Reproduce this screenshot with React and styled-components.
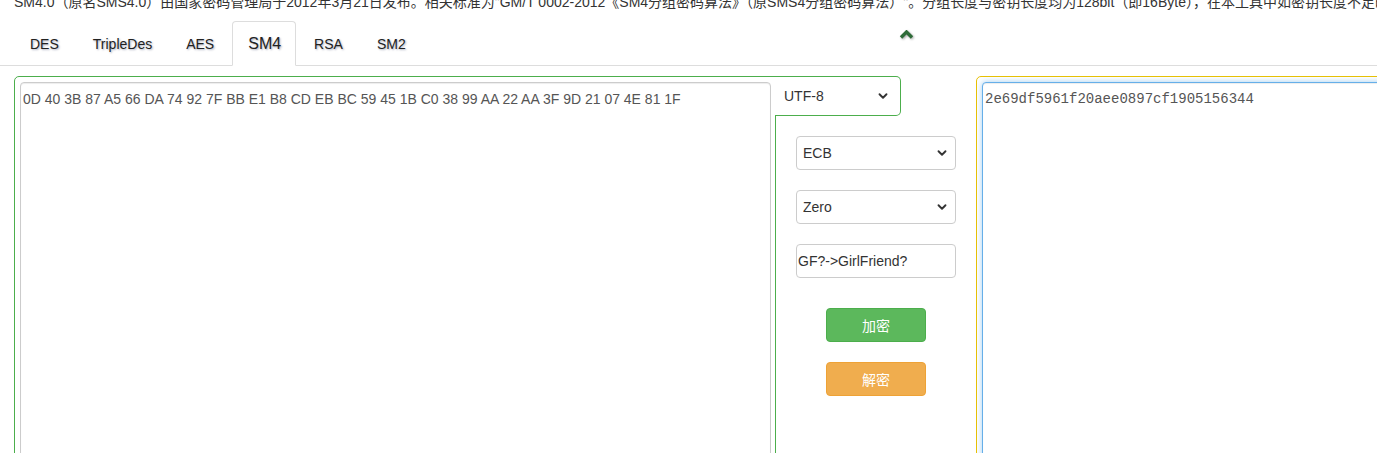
import React, { useState } from 'react';
import styled, { createGlobalStyle } from 'styled-components';
import { ChevronDown } from 'lucide-react';

const GlobalStyle = createGlobalStyle`
  html, body {
    margin: 0;
    padding: 0;
    background: #fff;
    overflow: hidden;
  }
  body {
    font-family: "Liberation Sans", Arial, "Noto Sans CJK SC", sans-serif;
    font-size: 14px;
    color: #333;
  }
  * {
    box-sizing: border-box;
  }
`;

const Page = styled.div`
  width: 1377px;
  height: 453px;
  overflow: hidden;
`;

const Intro = styled.p`
  margin: -8px 0 0;
  padding-left: 14px;
  line-height: 20px;
  white-space: nowrap;
  overflow: hidden;
  color: #333;
`;

const TabBar = styled.ul`
  display: flex;
  margin: 9px 0 0;
  padding: 0 0 0 14px;
  list-style: none;
  border-bottom: 1px solid #ddd;
  height: 45px;
`;

const Tab = styled.li`
  flex-shrink: 0;
  height: 45px;
  margin-right: 2px;
  margin-bottom: -1px;
  padding: 0 ${p => (p.$active ? 14 : 15)}px 0 15px;
  display: flex;
  align-items: center;
  font-size: ${p => (p.$active ? '16px' : '14px')};
  color: #222;
  text-shadow: 1px 1px 2px rgba(10, 20, 70, 0.35);
  border: 1px solid ${p => (p.$active ? '#ddd' : 'transparent')};
  border-bottom-color: ${p => (p.$active ? '#fff' : 'transparent')};
  border-radius: 4px 4px 0 0;
  background: ${p => (p.$active ? '#fff' : 'transparent')};
  cursor: pointer;
`;

const Collapse = styled.li`
  margin: 9px 0 0 475px;
  height: 10px;
  line-height: 0;
  filter: drop-shadow(1px 1px 1px rgba(0, 0, 0, 0.35));
`;

const Main = styled.div`
  display: flex;
  align-items: flex-start;
  margin-top: 10px;
  padding-left: 14px;

  & > * {
    flex-shrink: 0;
  }
`;

const InputBox = styled.div`
  width: 762px;
  height: 420px;
  padding: 5px 4px 5px 5px;
  border: 1px solid #4cae4c;
  border-radius: 5px 0 0 0;
`;

const TextArea = styled.textarea`
  display: block;
  width: 100%;
  height: 100%;
  resize: none;
  margin: 0;
  padding: 6px 2px;
  font-family: ${p =>
    p.$mono
      ? '"Liberation Mono", "Courier New", monospace'
      : '"Liberation Sans", Arial, sans-serif'};
  font-size: 14px;
  line-height: 20px;
  color: #555;
  border: 1px solid ${p => (p.$focus ? '#66afe9' : '#ccc')};
  border-radius: 4px;
  box-shadow: ${p =>
    p.$focus
      ? 'inset 0 1px 1px rgba(0,0,0,.075), 0 0 6px rgba(102,175,233,.6)'
      : 'inset 0 1px 1px rgba(0,0,0,.075)'};
  outline: none;
`;

const Controls = styled.div`
  width: 200px;
  display: flex;
  flex-direction: column;
  align-items: center;
`;

const CharsetCap = styled.div`
  position: relative;
  z-index: 1;
  align-self: flex-start;
  margin-left: -1px;
  width: 126px;
  height: 40px;
  padding: 0 4px;
  display: flex;
  align-items: center;
  background: #fff;
  border: 1px solid #4cae4c;
  border-left: none;
  border-radius: 0 5px 5px 0;
  margin-bottom: 20px;
`;

const SelectWrap = styled.div`
  position: relative;
  width: ${p => p.$width}px;
  margin-bottom: ${p => p.$gap ?? 20}px;

  svg {
    position: absolute;
    right: ${p => p.$arrowRight ?? 7}px;
    top: 50%;
    transform: translateY(-50%);
    pointer-events: none;
    color: #333;
  }
`;

const Select = styled.select`
  appearance: none;
  width: 100%;
  height: ${p => (p.$bare ? 30 : 34)}px;
  padding: 0 24px 0 ${p => (p.$bare ? 5 : 6)}px;
  font-family: "Liberation Sans", Arial, sans-serif;
  font-size: 14px;
  color: #333;
  background: #fff;
  border: ${p => (p.$bare ? 'none' : '1px solid #ccc')};
  border-radius: 4px;
  outline: none;
`;

const KeyInput = styled.input`
  width: 160px;
  height: 34px;
  margin-bottom: 30px;
  padding: 0 1px;
  font-family: "Liberation Sans", Arial, sans-serif;
  font-size: 14px;
  color: #333;
  border: 1px solid #ccc;
  border-radius: 4px;
  outline: none;
`;

const Button = styled.button`
  width: 100px;
  height: 34px;
  margin-bottom: 20px;
  font-family: "Liberation Sans", "Noto Sans CJK SC", sans-serif;
  font-size: 14px;
  color: #fff;
  background: ${p => (p.$variant === 'warning' ? '#f0ad4e' : '#5cb85c')};
  border: 1px solid ${p => (p.$variant === 'warning' ? '#eea236' : '#4cae4c')};
  border-radius: 4px;
  cursor: pointer;
`;

const OutputBox = styled.div`
  width: 520px;
  height: 420px;
  padding: 5px;
  border: 1px solid #eac100;
  border-radius: 5px;
`;

const tabs = ['DES', 'TripleDes', 'AES', 'SM4', 'RSA', 'SM2'];

const App = () => {
  const [active, setActive] = useState('SM4');

  return (
    <Page>
      <GlobalStyle />
      <Intro>
        SM4.0（原名SMS4.0）由国家密码管理局于2012年3月21日发布。相关标准为"GM/T 0002-2012《SM4分组密码算法》（原SMS4分组密码算法）"。分组长度与密钥长度均为128bit（即16Byte），在本工具中如密钥长度不足时自动补齐
      </Intro>
      <TabBar>
        {tabs.map(t => (
          <Tab key={t} $active={t === active} onClick={() => setActive(t)}>
            {t}
          </Tab>
        ))}
        <Collapse>
          <svg width="15" height="9" viewBox="0 0 15 9">
            <polyline points="2,7.5 7.5,2 13,7.5" fill="none" stroke="#2e6b38" strokeWidth="3.4" />
          </svg>
        </Collapse>
      </TabBar>

      <Main>
        <InputBox>
          <TextArea
            readOnly
            value="0D 40 3B 87 A5 66 DA 74 92 7F BB E1 B8 CD EB BC 59 45 1B C0 38 99 AA 22 AA 3F 9D 21 07 4E 81 1F"
          />
        </InputBox>

        <Controls>
          <CharsetCap>
            <SelectWrap $width={117} $gap={0} $arrowRight={6}>
              <Select $bare defaultValue="UTF-8">
                <option>UTF-8</option>
                <option>GBK</option>
              </Select>
              <ChevronDown size={14} strokeWidth={3.2} />
            </SelectWrap>
          </CharsetCap>

          <SelectWrap $width={160}>
            <Select defaultValue="ECB">
              <option>ECB</option>
              <option>CBC</option>
            </Select>
            <ChevronDown size={14} strokeWidth={3.2} />
          </SelectWrap>

          <SelectWrap $width={160}>
            <Select defaultValue="Zero">
              <option>Zero</option>
              <option>Pkcs7</option>
            </Select>
            <ChevronDown size={14} strokeWidth={3.2} />
          </SelectWrap>

          <KeyInput defaultValue="GF?->GirlFriend?" />

          <Button>加密</Button>
          <Button $variant="warning">解密</Button>
        </Controls>

        <OutputBox>
          <TextArea $mono $focus readOnly value="2e69df5961f20aee0897cf1905156344" />
        </OutputBox>
      </Main>
    </Page>
  );
};

export default App;
